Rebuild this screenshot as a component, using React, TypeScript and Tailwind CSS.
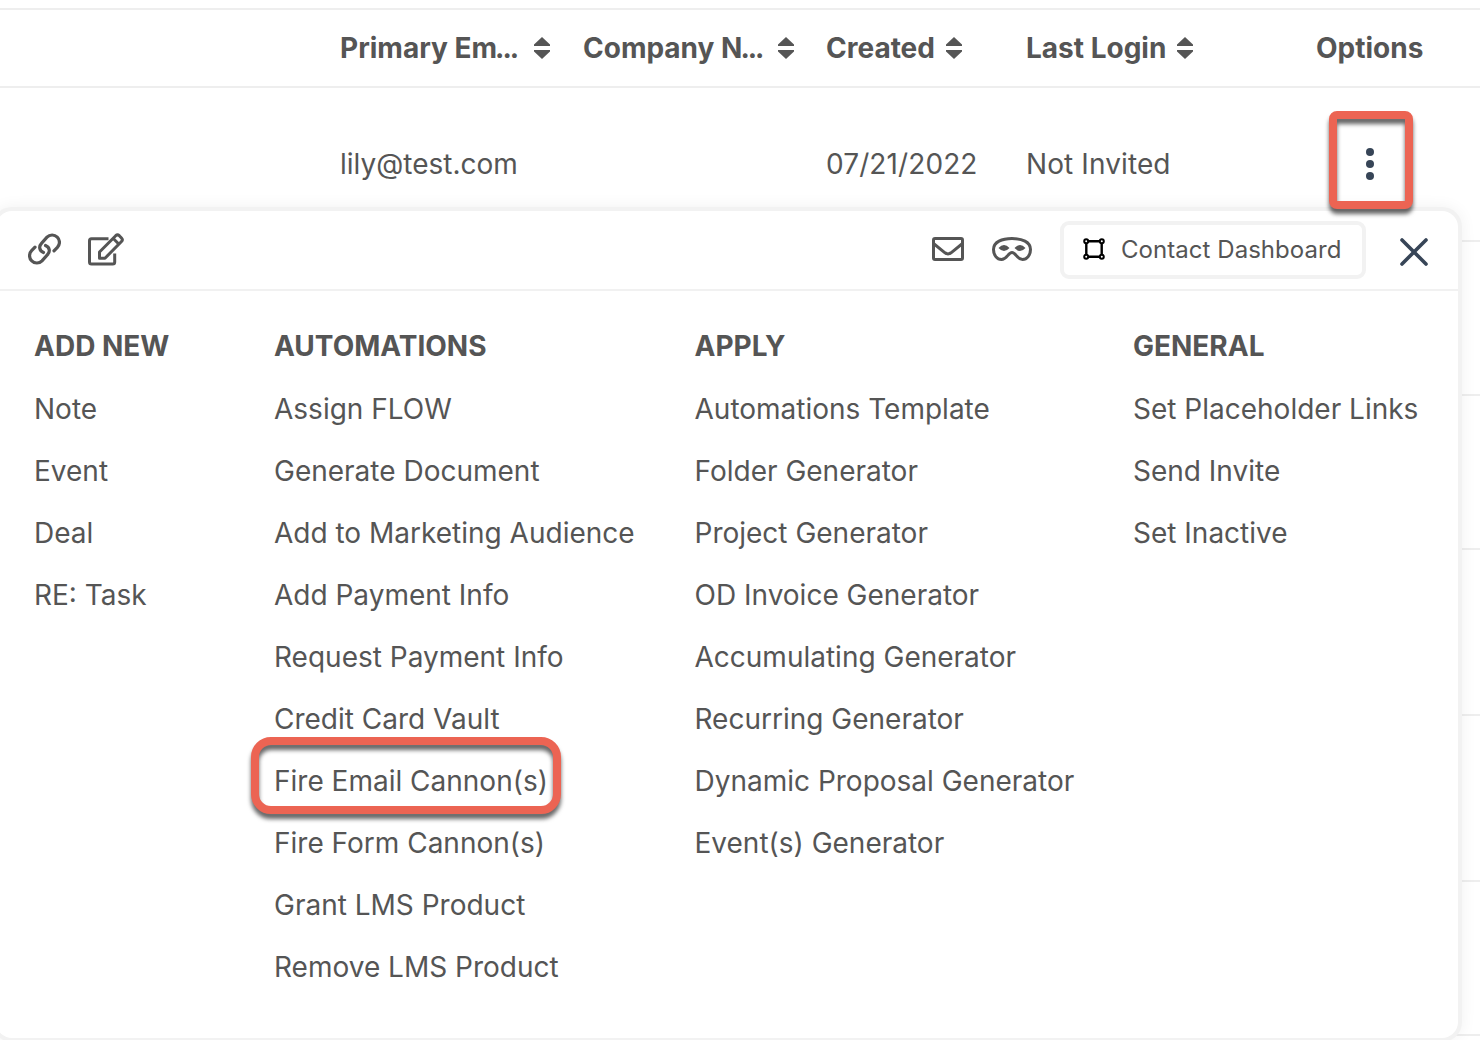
const columns = [
  { label: "Primary Em", truncated: true, width: "w-[243px]", gap: "gap-[17px]" },
  { label: "Company N", truncated: true, width: "w-[243px]", gap: "gap-4" },
  { label: "Created", truncated: false, width: "w-[200px]", gap: "gap-[11px]" },
  { label: "Last Login", truncated: false, width: "w-[290px]", gap: "gap-[11px]" },
];

const menuGroups = [
  {
    title: "ADD NEW",
    width: "w-60",
    items: ["Note", "Event", "Deal", "RE: Task"],
  },
  {
    title: "AUTOMATIONS",
    width: "w-[420.5px]",
    items: [
      "Assign FLOW",
      "Generate Document",
      "Add to Marketing Audience",
      "Add Payment Info",
      "Request Payment Info",
      "Credit Card Vault",
      "Fire Email Cannon(s)",
      "Fire Form Cannon(s)",
      "Grant LMS Product",
      "Remove LMS Product",
    ],
  },
  {
    title: "APPLY",
    width: "w-[438.5px]",
    items: [
      "Automations Template",
      "Folder Generator",
      "Project Generator",
      "OD Invoice Generator",
      "Accumulating Generator",
      "Recurring Generator",
      "Dynamic Proposal Generator",
      "Event(s) Generator",
    ],
  },
  {
    title: "GENERAL",
    width: "w-[300px]",
    items: ["Set Placeholder Links", "Send Invite", "Set Inactive"],
  },
];

// Heights of the rows that sit behind the open menu
const emptyRows = ["h-[154px]", "h-[154px]", "h-[166px]", "h-[166px]", "h-[154px]"];

const SortIcon = () => (
  <svg width="16" height="22" viewBox="0 0 16 22" fill="#555" className="shrink-0">
    <path d="M8 0 16 7.500V9H0V7.500Z" />
    <path d="M8 22 16 14.500V13H0V14.500Z" />
  </svg>
);

const LinkIcon = () => (
  <svg width="33" height="32" viewBox="0 0 33 32" fill="none" stroke="#555" strokeWidth="3.200" strokeLinecap="round">
    <path d="M15.500 19.500C11.200 17.800 10.600 13.400 13.500 10.300L19 4.200A7.200 7.200 0 0 1 29.400 14.300L26 17.800" />
    <path d="M17.500 12.500C21.800 14.200 22.400 18.600 19.500 21.700L14 27.800A7.200 7.200 0 0 1 3.600 17.700L7 14.200" />
  </svg>
);

const EditIcon = () => (
  <svg width="36" height="33" viewBox="0 0 36 33" fill="none" stroke="#555" strokeWidth="3" strokeLinejoin="round">
    <path d="M20.500 5.800H3.500Q1.500 5.800 1.500 7.800V29Q1.500 31 3.500 31H24.700Q26.700 31 26.700 29V20.500" />
    <path d="M11.500 25.200V19L27.700 2.700Q29.500 1 31.300 2.700L33.500 5Q35.200 6.800 33.500 8.500L17 25.200Z" />
    <path d="M25.300 5.500 31 11.200" />
  </svg>
);

const MailIcon = () => (
  <svg width="32" height="24" viewBox="0 0 32 24" fill="none" stroke="#555" strokeWidth="3">
    <rect x="1.500" y="1.500" width="29" height="21" rx="1.500" />
    <path d="M1.500 6.500 13 15.800Q16 18.100 19 15.800L30.500 6.500" />
  </svg>
);

const MaskIcon = () => (
  <svg width="40" height="24" viewBox="0 0 40 24" fill="none" stroke="#555" strokeWidth="3">
    <path d="M20 1.500C30 1.500 38.500 5 38.500 12.500C38.500 18 35 22.500 30.500 22.500C25 22.500 24 15.500 20 15.500C16 15.500 15 22.500 9.500 22.500C5 22.500 1.500 18 1.500 12.500C1.500 5 10 1.500 20 1.500Z" />
    <path d="M6.500 11Q12 5 17.500 11Q12 17 6.500 11ZM22.500 11Q28 5 33.500 11Q28 17 22.500 11Z" fill="#555" stroke="none" />
  </svg>
);

const FrameIcon = () => (
  <svg width="22" height="22" viewBox="0 0 22 22" fill="none" stroke="#000" strokeWidth="2">
    <path d="M5 3.300H17M5 18.700H17M3.300 5V17M18.700 5V17" strokeWidth="2.400" />
    <circle cx="3.200" cy="3.200" r="2" />
    <circle cx="18.800" cy="3.200" r="2" />
    <circle cx="3.200" cy="18.800" r="2" />
    <circle cx="18.800" cy="18.800" r="2" />
  </svg>
);

const CloseIcon = () => (
  <svg width="28" height="28" viewBox="0 0 28 28" stroke="#374557" strokeWidth="3.600" strokeLinecap="round">
    <path d="M2 2 26 26M26 2 2 26" />
  </svg>
);

const ContactMenu = () => (
  <div className="absolute top-[211px] -left-1 w-[1462px] h-[827px] rounded-[16px] bg-white shadow-[0_0_0_4px_#f2f2f2,0_0_16px_4px_rgba(0,0,0,0.06)]">
    {/* Toolbar */}
    <div className="flex h-20 items-center border-b-2 border-[#f1f1f1] pl-8 pr-[30px]">
      <button className="mb-0.5"><LinkIcon /></button>
      <button className="mb-0.5 ml-[27px]"><EditIcon /></button>
      <button className="mb-0.5 ml-auto"><MailIcon /></button>
      <button className="mb-0.5 ml-7"><MaskIcon /></button>
      <button className="ml-[28.5px] flex h-[58px] w-[306px] shrink-0 items-center rounded-[9px] border-4 border-[#f2f2f2] pl-[19px] text-2xl">
        <span className="mb-0.5"><FrameIcon /></span>
        <span className="ml-4 whitespace-nowrap tracking-[0.05px]">Contact Dashboard</span>
      </button>
      <button className="ml-[34px] mt-1"><CloseIcon /></button>
    </div>

    {/* Actions */}
    <div className="flex pl-[38px] pt-6">
      {menuGroups.map((group) => (
        <div key={group.title} className={`shrink-0 ${group.width}`}>
          <h3 className="flex h-[62px] items-center font-bold">{group.title}</h3>
          <ul>
            {group.items.map((item) => (
              <li key={item} className="relative flex h-[62px] items-center whitespace-nowrap pt-0.5">
                {item}
                {item === "Fire Email Cannon(s)" && (
                  <span className="absolute -left-[23px] -top-3 h-[77px] w-[310px] rounded-[20px] border-8 border-[#ec6453] drop-shadow-[0_5px_2px_rgba(0,0,0,0.6)]" />
                )}
              </li>
            ))}
          </ul>
        </div>
      ))}
    </div>
  </div>
);

const App = () => {
  return (
    <div className="relative h-[1040px] w-[1480px] overflow-hidden bg-white font-['Inter',sans-serif] text-[28px] leading-9 text-[#555]">
      {/* Table header */}
      <div className="mt-2 flex h-20 items-center border-y-2 border-[#eee] pl-[340px] font-bold">
        {columns.map((col) => (
          <div key={col.label} className={`flex shrink-0 items-center whitespace-nowrap ${col.width} ${col.gap}`}>
            <span>
              {col.label}
              {col.truncated && <span className="-ml-0.5 tracking-[-2px]">...</span>}
            </span>
            <SortIcon />
          </div>
        ))}
        <div>Options</div>
      </div>

      {/* Contact row */}
      <div className="flex h-[154px] items-center border-b-2 border-[#eee] pl-[340px]">
        <div className="w-[486px]">lily@test.com</div>
        <div className="w-[200px] tracking-[0.1px]">07/21/2022</div>
        <div className="w-[303px] tracking-[0.1px]">Not Invited</div>
        <button className="relative z-10 mb-2 flex h-[98px] w-[84px] items-center justify-center">
          <span className="absolute inset-0 rounded-[8px] border-8 border-[#ec6453] drop-shadow-[0_5px_2px_rgba(0,0,0,0.6)]" />
          <svg width="8" height="32" viewBox="0 0 8 32" fill="#374557" className="relative top-1 -left-px">
            <circle cx="4" cy="4" r="4" />
            <circle cx="4" cy="16" r="4" />
            <circle cx="4" cy="28" r="4" />
          </svg>
        </button>
      </div>
      {emptyRows.map((height, i) => (
        <div key={i} className={`border-b-2 border-[#eee] ${height}`} />
      ))}

      <ContactMenu />
    </div>
  );
};

export default App;
